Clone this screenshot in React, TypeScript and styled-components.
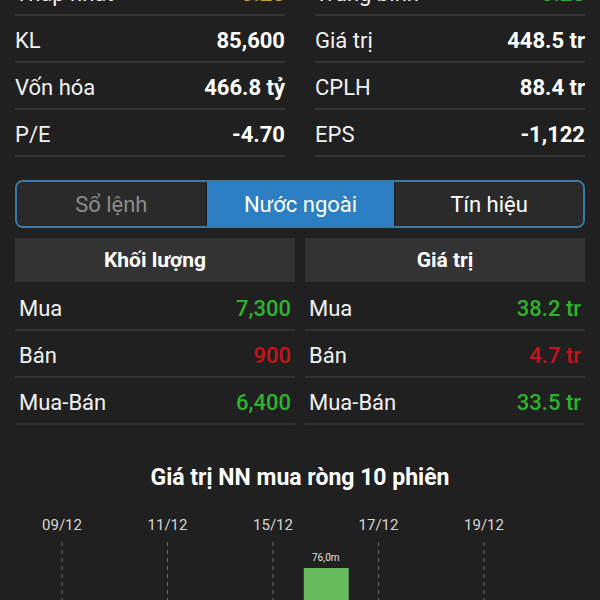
import React from "react";
import styled, { createGlobalStyle } from "styled-components";

const GlobalStyle = createGlobalStyle`
  html, body {
    margin: 0;
    padding: 0;
    background: #202020;
  }
  body {
    font-family: Roboto, "Noto Sans", "Liberation Sans", sans-serif;
    color: #ffffff;
  }
`;

const Page = styled.div`
  width: 600px;
  height: 600px;
  overflow: hidden;
  background: #202020;
`;

const StatsGrid = styled.div`
  display: grid;
  grid-template-columns: 1fr 1fr;
  column-gap: 30px;
  padding: 0 15px;
  margin-top: -31px;
`;

const StatRow = styled.div`
  height: 47px;
  box-sizing: border-box;
  display: flex;
  align-items: center;
  justify-content: space-between;
  border-bottom: 2px solid #353535;
  padding-top: 3px;
`;

const StatLabel = styled.span`
  font-size: 22px;
  color: #f2f2f2;
`;

const StatValue = styled.span<{ $color?: string }>`
  font-size: 22px;
  font-weight: 700;
  color: ${(p) => p.$color || "#ffffff"};
`;

const Tabs = styled.div`
  margin: 23px 15px 0;
  height: 48px;
  box-sizing: border-box;
  display: grid;
  grid-template-columns: repeat(3, 1fr);
  border: 2px solid #3d7aa3;
  border-radius: 8px;
  overflow: hidden;
  background: #2a2a2a;
`;

const Tab = styled.div<{ $active?: boolean; $dim?: boolean }>`
  display: flex;
  align-items: center;
  justify-content: center;
  font-size: 22px;
  background: ${(p) => (p.$active ? "#2b7fc2" : "#2a2a2a")};
  color: ${(p) => (p.$dim ? "#8c8c8c" : "#ffffff")};
  & + & {
    border-left: 1px solid #1c1c1c;
  }
`;

const ForeignGrid = styled.div`
  display: grid;
  grid-template-columns: 1fr 1fr;
  column-gap: 10px;
  padding: 0 15px;
  margin-top: 10px;
`;

const Column = styled.div`
  display: flex;
  flex-direction: column;
`;

const ColumnHeader = styled.div`
  height: 44px;
  display: flex;
  align-items: center;
  justify-content: center;
  background: #333333;
  font-size: 21px;
  font-weight: 700;
  margin-bottom: 2px;
`;

const TradeRow = styled.div`
  height: 47px;
  box-sizing: border-box;
  display: flex;
  align-items: center;
  justify-content: space-between;
  padding: 3px 4px 0;
  border-bottom: 2px solid #333333;
`;

const TradeLabel = styled.span`
  font-size: 22px;
  color: #f2f2f2;
`;

const TradeValue = styled.span<{ $color: string }>`
  font-size: 22px;
  font-weight: 500;
  color: ${(p) => p.$color};
`;

const ChartTitle = styled.div`
  margin-top: 40px;
  text-align: center;
  font-size: 23px;
  font-weight: 700;
  line-height: 26px;
`;

const ChartSvg = styled.svg`
  display: block;
  margin-top: 6px;
`;

const GREEN = "#2cb52c";
const RED = "#c8141c";

const stats: [string, string, string?][] = [
  ["Thấp nhất", "5.23", "#c9a227"],
  ["Trung bình", "5.28", GREEN],
  ["KL", "85,600"],
  ["Giá trị", "448.5 tr"],
  ["Vốn hóa", "466.8 tỷ"],
  ["CPLH", "88.4 tr"],
  ["P/E", "-4.70"],
  ["EPS", "-1,122"],
];

const volume = [
  { label: "Mua", value: "7,300", color: GREEN },
  { label: "Bán", value: "900", color: RED },
  { label: "Mua-Bán", value: "6,400", color: GREEN },
];

const amount = [
  { label: "Mua", value: "38.2 tr", color: GREEN },
  { label: "Bán", value: "4.7 tr", color: RED },
  { label: "Mua-Bán", value: "33.5 tr", color: GREEN },
];

const ticks = ["09/12", "11/12", "15/12", "17/12", "19/12"];

const Chart = () => {
  const x0 = 62;
  const step = 52.75;
  const barX = x0 + 5 * step;
  return (
    <ChartSvg width="600" height="110" viewBox="0 0 600 110">
      {ticks.map((t, i) => {
        const x = x0 + i * 2 * step;
        return (
          <g key={t}>
            <text
              x={x}
              y={33}
              fill="#d6d6d6"
              fontSize="15"
              fontFamily="Roboto, sans-serif"
              textAnchor="middle"
            >
              {t}
            </text>
            <line
              x1={x}
              y1={45}
              x2={x}
              y2={110}
              stroke="#6a6a6a"
              strokeWidth="1"
              strokeDasharray="4 4"
            />
          </g>
        );
      })}
      <rect x={barX - 22} y={71} width={45} height={40} fill="#66bb5c" />
      <text
        x={barX}
        y={64}
        fill="#e0e0e0"
        fontSize="10"
        fontFamily="Roboto, sans-serif"
        textAnchor="middle"
      >
        76,0m
      </text>
    </ChartSvg>
  );
};

const App = () => {
  return (
    <Page>
      <GlobalStyle />
      <StatsGrid>
        {stats.map(([label, value, color]) => (
          <StatRow key={label}>
            <StatLabel>{label}</StatLabel>
            <StatValue $color={color}>{value}</StatValue>
          </StatRow>
        ))}
      </StatsGrid>

      <Tabs>
        <Tab $dim>Sổ lệnh</Tab>
        <Tab $active>Nước ngoài</Tab>
        <Tab>Tín hiệu</Tab>
      </Tabs>

      <ForeignGrid>
        <Column>
          <ColumnHeader>Khối lượng</ColumnHeader>
          {volume.map((r) => (
            <TradeRow key={r.label}>
              <TradeLabel>{r.label}</TradeLabel>
              <TradeValue $color={r.color}>{r.value}</TradeValue>
            </TradeRow>
          ))}
        </Column>
        <Column>
          <ColumnHeader>Giá trị</ColumnHeader>
          {amount.map((r) => (
            <TradeRow key={r.label}>
              <TradeLabel>{r.label}</TradeLabel>
              <TradeValue $color={r.color}>{r.value}</TradeValue>
            </TradeRow>
          ))}
        </Column>
      </ForeignGrid>

      <ChartTitle>Giá trị NN mua ròng 10 phiên</ChartTitle>
      <Chart />
    </Page>
  );
};

export default App;
